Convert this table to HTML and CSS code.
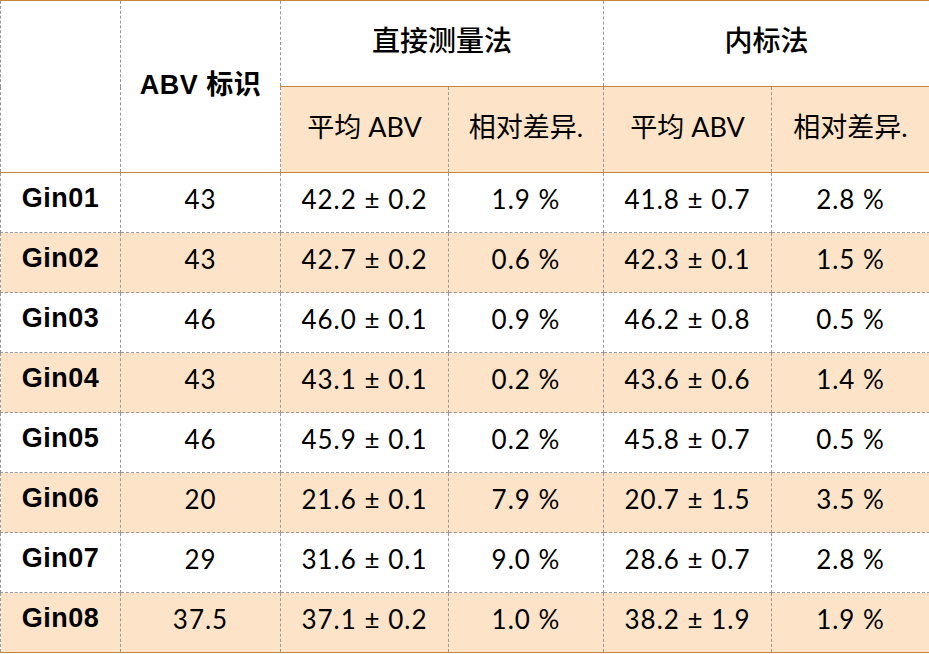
FILE: index.html
```html
<!DOCTYPE html>
<html lang="zh">
<head>
<meta charset="utf-8">
<link rel="stylesheet" href="styles.css">
</head>
<body>
<table class="abv">
  <colgroup>
    <col class="c1"><col class="c2"><col class="c3"><col class="c4"><col class="c5"><col class="c6">
  </colgroup>
  <thead>
    <tr class="h1">
      <th rowspan="2" class="blank"></th>
      <th rowspan="2" class="bold">ABV 标识</th>
      <th colspan="2" class="group">直接测量法</th>
      <th colspan="2" class="group">内标法</th>
    </tr>
    <tr class="h2">
      <th class="sub">平均 ABV</th>
      <th class="sub">相对差异.</th>
      <th class="sub">平均 ABV</th>
      <th class="sub">相对差异.</th>
    </tr>
  </thead>
  <tbody>
    <tr><th>Gin01</th><td>43</td><td>42.2 ± 0.2</td><td>1.9 %</td><td>41.8 ± 0.7</td><td>2.8 %</td></tr>
    <tr class="alt"><th>Gin02</th><td>43</td><td>42.7 ± 0.2</td><td>0.6 %</td><td>42.3 ± 0.1</td><td>1.5 %</td></tr>
    <tr><th>Gin03</th><td>46</td><td>46.0 ± 0.1</td><td>0.9 %</td><td>46.2 ± 0.8</td><td>0.5 %</td></tr>
    <tr class="alt"><th>Gin04</th><td>43</td><td>43.1 ± 0.1</td><td>0.2 %</td><td>43.6 ± 0.6</td><td>1.4 %</td></tr>
    <tr><th>Gin05</th><td>46</td><td>45.9 ± 0.1</td><td>0.2 %</td><td>45.8 ± 0.7</td><td>0.5 %</td></tr>
    <tr class="alt"><th>Gin06</th><td>20</td><td>21.6 ± 0.1</td><td>7.9 %</td><td>20.7 ± 1.5</td><td>3.5 %</td></tr>
    <tr><th>Gin07</th><td>29</td><td>31.6 ± 0.1</td><td>9.0 %</td><td>28.6 ± 0.7</td><td>2.8 %</td></tr>
    <tr class="alt"><th>Gin08</th><td>37.5</td><td>37.1 ± 0.2</td><td>1.0 %</td><td>38.2 ± 1.9</td><td>1.9 %</td></tr>
  </tbody>
</table>
</body>
</html>
```
FILE: styles.css
```css
html, body {
  margin: 0;
  padding: 0;
  background: #ffffff;
}
.abv {
  width: 929px;
  border-collapse: collapse;
  table-layout: fixed;
  font-family: "Lato", "Noto Sans CJK SC", sans-serif;
  font-size: 26px;
  color: #000;
}
.c1 { width: 120px; }
.c2 { width: 160px; }
.c3 { width: 168px; }
.c4 { width: 155px; }
.c5 { width: 168px; }
.c6 { width: 158px; }

.abv th, .abv td {
  border: 1px dashed #999;
  text-align: center;
  vertical-align: middle;
  padding: 0 0 8px 0;
}
.abv thead tr:first-child th {
  border-top: 1px solid #c8843f;
}
.h1 { height: 86px; }
.h2 { height: 86px; }
.abv .group {
  font-family: "Noto Sans CJK SC", sans-serif;
  font-weight: 500;
  font-size: 28px;
  border-bottom: 1px solid #c8843f;
  padding-bottom: 10px;
}
.abv .bold {
  font-family: "Liberation Sans", "Noto Sans CJK SC", sans-serif;
  font-weight: 700;
  font-size: 27px;
  letter-spacing: 0.5px;
}
.abv .sub {
  background: #fde4c9;
  font-family: "Lato", "Noto Sans CJK SC", sans-serif;
  font-weight: 400;
  font-size: 27px;
}
.abv thead tr.h2 th,
.abv thead .blank,
.abv thead .bold {
  border-bottom: 1px solid #c8843f;
}
.abv tbody tr { height: 60px; }
.abv tbody th {
  font-family: "Liberation Sans", sans-serif;
  font-weight: 700;
  font-size: 27px;
  letter-spacing: 0.5px;
}
.abv tbody td {
  font-weight: 400;
  font-size: 26px;
  letter-spacing: 1px;
}
.abv tbody tr.alt th,
.abv tbody tr.alt td {
  background: #fde4c9;
}
.abv tbody tr:last-child th,
.abv tbody tr:last-child td {
  border-bottom: 1px solid #c8843f;
}
```
